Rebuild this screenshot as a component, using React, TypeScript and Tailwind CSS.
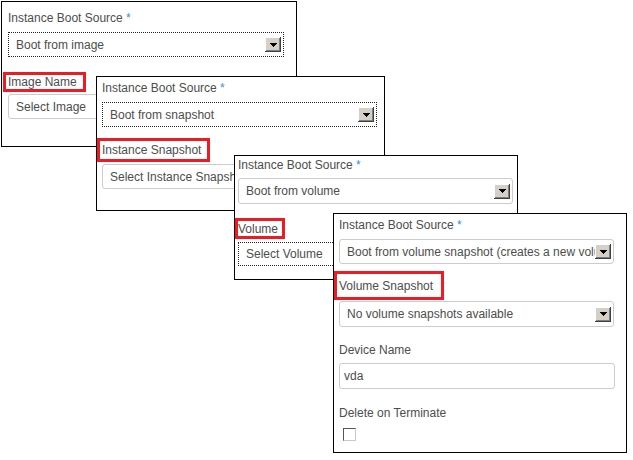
import type { ReactNode } from "react";

const FONT = "font-['Liberation_Sans',Arial,sans-serif]";

function DropButton() {
  return (
    <span className="mr-[2px] flex h-[15px] w-[16px] shrink-0 items-center justify-center bg-[#d4d0c8] shadow-[inset_-1px_-1px_#404040,inset_1px_1px_#ffffff,inset_-2px_-2px_#808080]">
      <svg width="7" height="4" viewBox="0 0 7 4" shapeRendering="crispEdges">
        <rect x="0" y="0" width="7" height="1" fill="#000" />
        <rect x="1" y="1" width="5" height="1" fill="#000" />
        <rect x="2" y="2" width="3" height="1" fill="#000" />
        <rect x="3" y="3" width="1" height="1" fill="#000" />
      </svg>
    </span>
  );
}

function Label({ children, required }: { children: ReactNode; required?: boolean }) {
  return (
    <div className="h-[16px] whitespace-nowrap leading-[16px]">
      {children}
      {required && <span className="text-[#3a8fd0]"> *</span>}
    </div>
  );
}

function Marked({ children, className }: { children: ReactNode; className: string }) {
  return (
    <div
      className={`flex items-center whitespace-nowrap border-[3px] border-[#ed1c24] leading-[14px] ${className}`}
    >
      {children}
    </div>
  );
}

function Select({
  value,
  dotted,
  button = true,
  className,
}: {
  value: string;
  dotted?: boolean;
  button?: boolean;
  className: string;
}) {
  return (
    <div
      className={`flex w-[275px] items-center bg-white pl-[7px] ${
        dotted ? "border border-dotted border-[#222]" : "rounded-[3px] border border-[#cccccc]"
      } ${className}`}
    >
      <span className="min-w-0 flex-1 overflow-hidden whitespace-nowrap">{value}</span>
      {button && <DropButton />}
    </div>
  );
}

function Panel({ children, className }: { children: ReactNode; className: string }) {
  return (
    <div className={`absolute flex flex-col items-start border border-black bg-white ${className}`}>
      {children}
    </div>
  );
}

export default function App() {
  return (
    <div className={`relative h-[460px] w-[633px] overflow-hidden bg-white text-[12px] text-[#4d4d4d] ${FONT}`}>
      {/* image */}
      <Panel className="left-[1px] top-[1px] h-[146px] w-[296px] pl-[6px] pt-[8px]">
        <Label required>Instance Boot Source</Label>
        <Select value="Boot from image" dotted className="mt-[6px] h-[25px] w-[276px]" />
        <Marked className="-ml-[5px] mt-[15px] h-[20px] w-[83px] pl-[2px]">Image Name</Marked>
        <Select value="Select Image" button={false} className="mt-[2px] h-[25px] w-[276px]" />
      </Panel>

      {/* snapshot */}
      <Panel className="left-[96px] top-[76px] h-[135px] w-[289px] pl-[5px] pt-[3px]">
        <Label required>Instance Boot Source</Label>
        <Select value="Boot from snapshot" dotted className="mt-[6px] h-[25px]" />
        <Marked className="-ml-[5px] mt-[11px] h-[24px] w-[113px] pl-[2px]">Instance Snapshot</Marked>
        <Select value="Select Instance Snapshot" button={false} className="mt-[2px] h-[25px]" />
      </Panel>

      {/* volume */}
      <Panel className="left-[234px] top-[155px] h-[125px] w-[284px] pl-[3px] pt-[1px]">
        <Label required>Instance Boot Source</Label>
        <Select value="Boot from volume" className="mt-[5px] h-[26px]" />
        <Marked className="-ml-[3px] mt-[14px] h-[21px] w-[50px]">Volume</Marked>
        <Select value="Select Volume" dotted button={false} className="mt-[3px] h-[24px]" />
      </Panel>

      {/* volume snapshot */}
      <Panel className="left-[333px] top-[213px] h-[240px] w-[294px] pl-[5px] pt-[3px]">
        <Label required>Instance Boot Source</Label>
        <Select
          value="Boot from volume snapshot (creates a new volume)"
          className="mt-[6px] h-[25px]"
        />
        <Marked className="-ml-[5px] mt-[7px] h-[29px] w-[110px] pl-[2px]">Volume Snapshot</Marked>
        <Select value="No volume snapshots available" className="mt-[1px] h-[26px]" />
        <div className="mt-[15px]">
          <Label>Device Name</Label>
        </div>
        <div className="mt-[5px] flex h-[26px] w-[276px] items-center rounded-[3px] border border-[#cccccc] pl-[4px]">
          vda
        </div>
        <div className="mt-[16px]">
          <Label>Delete on Terminate</Label>
        </div>
        <span className="ml-[4px] mt-[7px] h-[13px] w-[13px] border border-b-[#c8c8c8] border-l-[#555] border-r-[#c8c8c8] border-t-[#555] bg-white" />
      </Panel>
    </div>
  );
}
